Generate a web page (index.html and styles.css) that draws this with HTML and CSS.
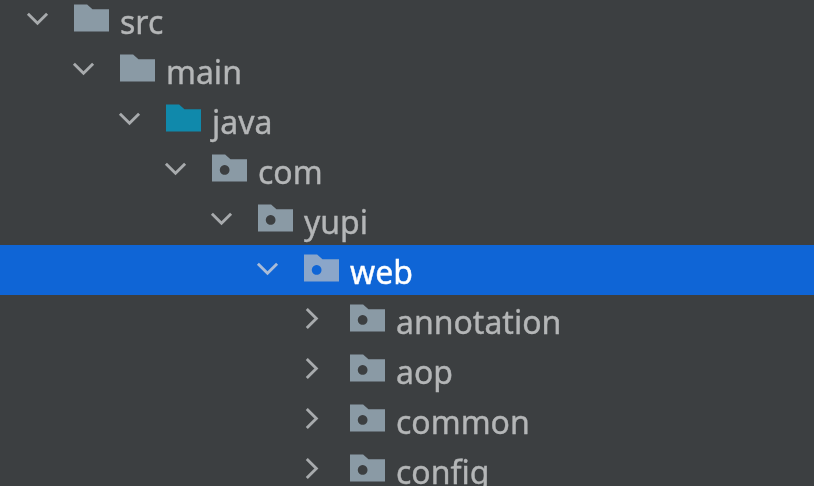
FILE: index.html
```html
<!DOCTYPE html>
<html lang="en">
<head>
  <meta charset="UTF-8" />
  <title>Project tree</title>
  <link rel="stylesheet" href="styles.css">
</head>
<body>
  <svg class="defs" width="0" height="0" aria-hidden="true">
    <symbol id="folder" viewBox="0 0 36 28">
      <path d="M0 0H13.5L19 5H36V28H0Z" />
    </symbol>
    <symbol id="package" viewBox="0 0 36 28">
      <path fill-rule="evenodd" d="M0 0H13.5L19 5H36V28H0ZM13 11a5 5 0 1 0 .01 0Z" />
    </symbol>
    <symbol id="open" viewBox="0 0 24 24">
      <path d="M2 7L12 17L22 7" />
    </symbol>
    <symbol id="closed" viewBox="0 0 24 24">
      <path d="M5 2L15 12L5 22" />
    </symbol>
  </svg>

  <div class="tree">
    <div class="row level-0">
      <svg class="arrow"><use href="#open" /></svg>
      <svg class="folder"><use href="#folder" /></svg>
      <span>src</span>
    </div>
    <div class="row level-1">
      <svg class="arrow"><use href="#open" /></svg>
      <svg class="folder"><use href="#folder" /></svg>
      <span>main</span>
    </div>
    <div class="row level-2">
      <svg class="arrow"><use href="#open" /></svg>
      <svg class="folder source"><use href="#folder" /></svg>
      <span>java</span>
    </div>
    <div class="row level-3">
      <svg class="arrow"><use href="#open" /></svg>
      <svg class="folder"><use href="#package" /></svg>
      <span>com</span>
    </div>
    <div class="row level-4">
      <svg class="arrow"><use href="#open" /></svg>
      <svg class="folder"><use href="#package" /></svg>
      <span>yupi</span>
    </div>
    <div class="row level-5 selected">
      <svg class="arrow"><use href="#open" /></svg>
      <svg class="folder"><use href="#package" /></svg>
      <span>web</span>
    </div>
    <div class="row level-6">
      <svg class="arrow"><use href="#closed" /></svg>
      <svg class="folder"><use href="#package" /></svg>
      <span>annotation</span>
    </div>
    <div class="row level-6">
      <svg class="arrow"><use href="#closed" /></svg>
      <svg class="folder"><use href="#package" /></svg>
      <span>aop</span>
    </div>
    <div class="row level-6">
      <svg class="arrow"><use href="#closed" /></svg>
      <svg class="folder"><use href="#package" /></svg>
      <span>common</span>
    </div>
    <div class="row level-6">
      <svg class="arrow"><use href="#closed" /></svg>
      <svg class="folder"><use href="#package" /></svg>
      <span>config</span>
    </div>
  </div>
</body>
</html>
```

FILE: styles.css
```css
html, body {
  height: 100%;
  margin: 0;
  overflow: hidden;
}

body {
  background: #3c3f41;
  font-family: "Noto Sans", sans-serif;
}

.defs {
  display: block;
  height: 0;
}

/* the reference is a soft, upscaled capture */
.tree {
  margin-top: -5px;
  filter: blur(0.5px);
}

.row {
  display: flex;
  align-items: center;
  height: 50px;
  color: #b4b6b7;
  font-size: 32px;
}

.row span {
  margin-left: 11px;
  margin-top: 4px;
  line-height: 1;
  -webkit-text-stroke: 0.4px currentColor;
}

.level-0 { padding-left: 26px; }
.level-1 { padding-left: 72px; }
.level-2 { padding-left: 118px; }
.level-3 { padding-left: 164px; }
.level-4 { padding-left: 210px; }
.level-5 { padding-left: 256px; }
.level-6 { padding-left: 302px; }

.arrow {
  width: 23px;
  height: 23px;
  margin-right: 25px;
  margin-top: -4px;
  fill: none;
  stroke: #a8abad;
  stroke-width: 3;
}

.folder {
  width: 35px;
  height: 28px;
  margin-top: -4px;
  fill: #8a9aa5;
}

.source {
  fill: #1089ab;
}

.selected {
  background: #0f65d6;
  color: #fff;
}

.selected .arrow {
  stroke: #a9bcd8;
}

.selected .folder {
  fill: #8ba6c9;
}
```
